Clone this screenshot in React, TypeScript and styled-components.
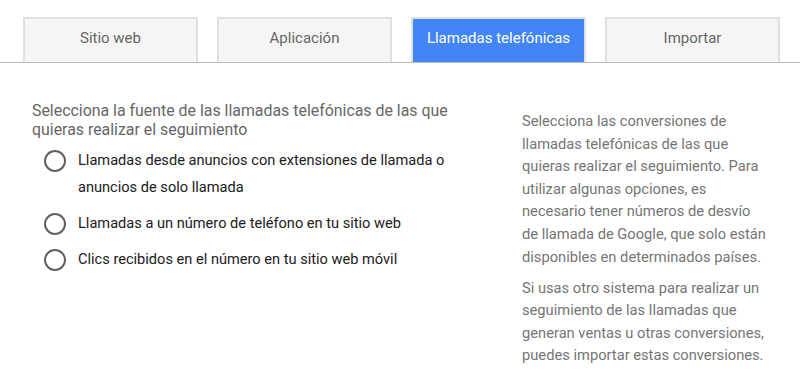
import React, { useState } from 'react'
import styled, { createGlobalStyle } from 'styled-components'

const GlobalStyle = createGlobalStyle`
  body {
    margin: 0;
    background: #fff;
    font-family: Roboto, "Noto Sans", Arial, sans-serif;
  }
`

const Page = styled.div`
  width: 800px;
  height: 381px;
  overflow: hidden;
`

const TabBar = styled.div`
  display: flex;
  gap: 19px;
  padding: 17px 0 0 23px;
  border-bottom: 1px solid #bdbdbd;
`

const Tab = styled.button<{ $active?: boolean }>`
  width: 175px;
  height: 45px;
  box-sizing: border-box;
  border: 2px solid #e0e0e0;
  border-bottom: none;
  background-color: ${(p) => (p.$active ? '#4285f4' : '#f5f5f5')};
  color: ${(p) => (p.$active ? '#fff' : '#666')};
  font-family: inherit;
  font-size: 15px;
  padding: 0 0 6px;
  cursor: pointer;
`

const Content = styled.div`
  display: flex;
  justify-content: space-between;
  padding: 38px 16px 0 32px;
`

const Main = styled.div`
  width: 440px;
`

const Title = styled.p`
  margin: 0 0 8px;
  font-size: 15.9px;
  line-height: 19px;
  color: #666;
`

const Options = styled.ul`
  list-style: none;
  margin: 0;
  padding: 0 0 0 12px;
  display: flex;
  flex-direction: column;
  gap: 9px;
`

const Option = styled.li`
  display: flex;
  align-items: flex-start;
  gap: 12px;
  font-size: 14.6px;
  line-height: 27px;
  color: #212121;
  cursor: pointer;
`

const Radio = styled.span<{ $checked?: boolean }>`
  flex: none;
  width: 22px;
  height: 22px;
  margin-top: 3px;
  box-sizing: border-box;
  border: 2px solid #616161;
  border-radius: 50%;
  display: flex;
  align-items: center;
  justify-content: center;

  &::after {
    content: '';
    width: 10px;
    height: 10px;
    border-radius: 50%;
    background: #4285f4;
    display: ${(p) => (p.$checked ? 'block' : 'none')};
  }
`

const Aside = styled.aside`
  width: 262px;
  padding-top: 9px;
  font-size: 14.7px;
  line-height: 22.6px;
  color: #757575;
  white-space: nowrap;

  p {
    margin: 0 0 8.5px;
  }
`

const tabs = ['Sitio web', 'Aplicación', 'Llamadas telefónicas', 'Importar']

const options = [
  'Llamadas desde anuncios con extensiones de llamada o anuncios de solo llamada',
  'Llamadas a un número de teléfono en tu sitio web',
  'Clics recibidos en el número en tu sitio web móvil',
]

const help = [
  [
    'Selecciona las conversiones de',
    'llamadas telefónicas de las que',
    'quieras realizar el seguimiento. Para',
    'utilizar algunas opciones, es',
    'necesario tener números de desvío',
    'de llamada de Google, que solo están',
    'disponibles en determinados países.',
  ],
  [
    'Si usas otro sistema para realizar un',
    'seguimiento de las llamadas que',
    'generan ventas u otras conversiones,',
    'puedes importar estas conversiones.',
  ],
]

export default function App() {
  const [active, setActive] = useState(2)
  const [selected, setSelected] = useState<number | null>(null)

  return (
    <Page>
      <GlobalStyle />
      <TabBar>
        {tabs.map((t, i) => (
          <Tab key={t} $active={i === active} onClick={() => setActive(i)}>
            {t}
          </Tab>
        ))}
      </TabBar>
      <Content>
        <Main>
          <Title>
            Selecciona la fuente de las llamadas telefónicas de las que quieras
            realizar el seguimiento
          </Title>
          <Options>
            {options.map((o, i) => (
              <Option key={o} onClick={() => setSelected(i)}>
                <Radio $checked={selected === i} />
                <span>{o}</span>
              </Option>
            ))}
          </Options>
        </Main>
        <Aside>
          {help.map((lines, i) => (
            <p key={i}>
              {lines.map((line, j) => (
                <React.Fragment key={j}>
                  {j > 0 && <br />}
                  {line}
                </React.Fragment>
              ))}
            </p>
          ))}
        </Aside>
      </Content>
    </Page>
  )
}
